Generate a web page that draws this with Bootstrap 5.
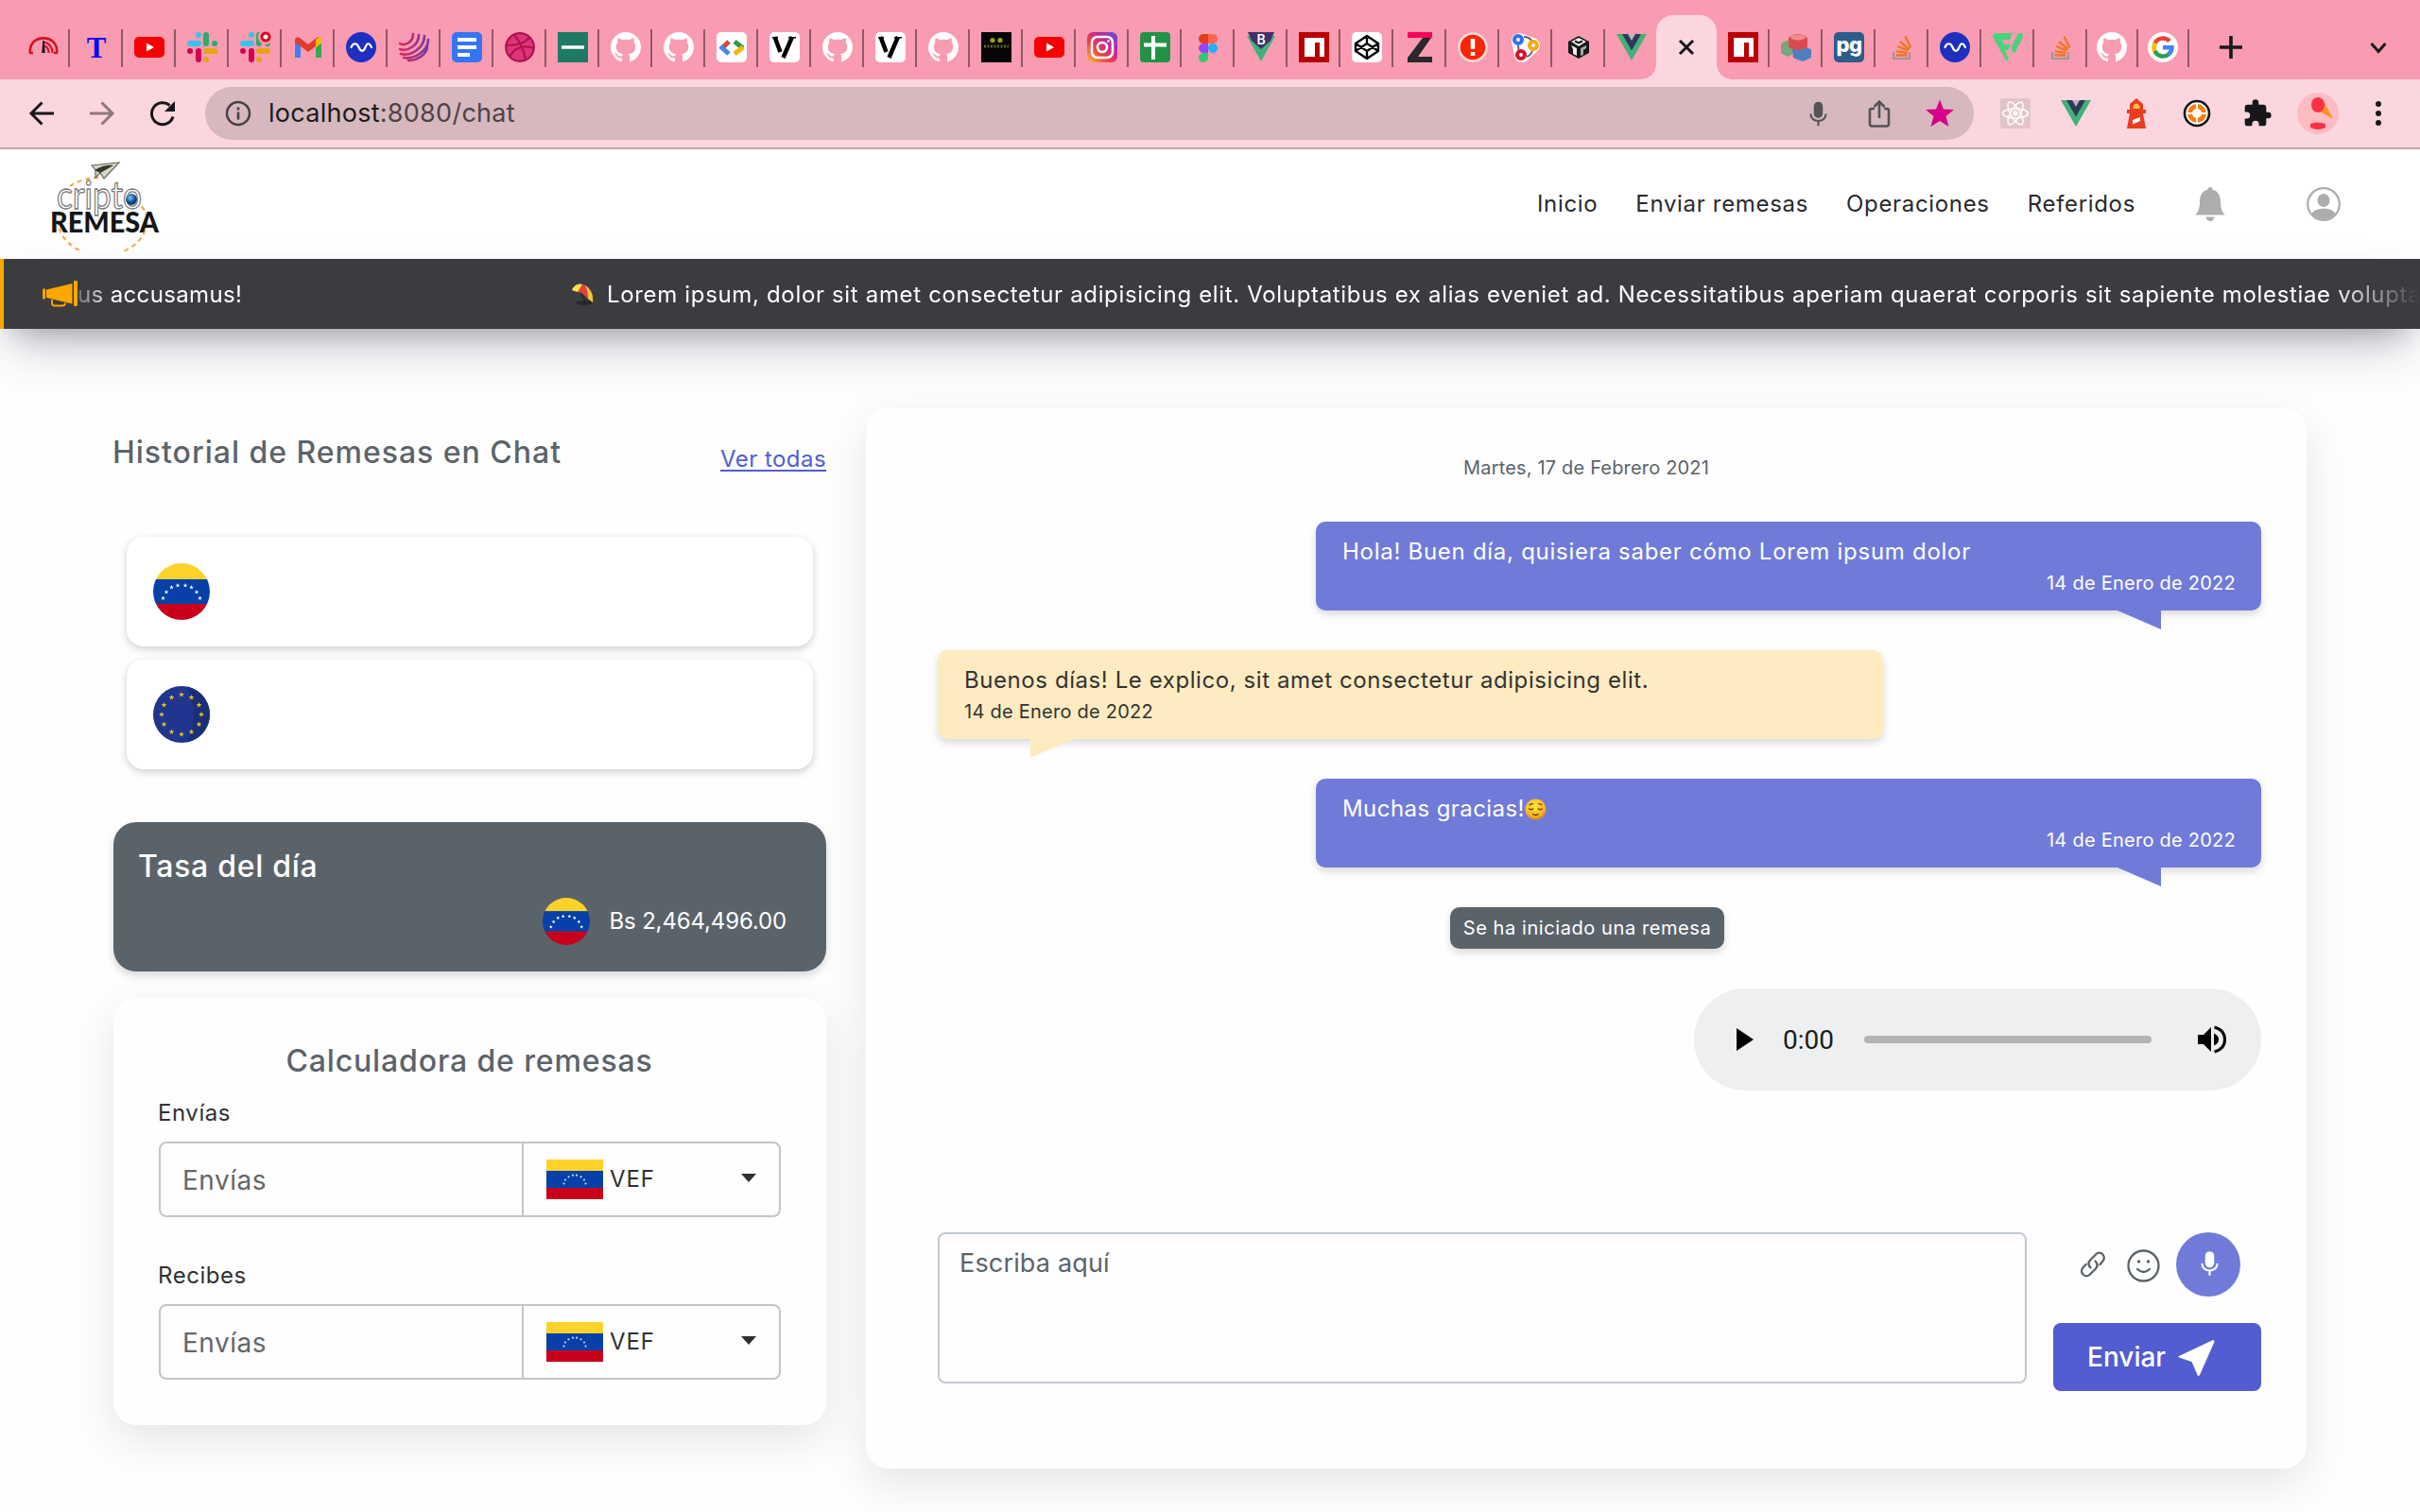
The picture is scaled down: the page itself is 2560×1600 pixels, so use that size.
<!DOCTYPE html>
<html lang="es">
<head>
<meta charset="utf-8">
<meta name="viewport" content="width=device-width, initial-scale=1">
<title>Cripto Remesa - Chat</title>
<link href="https://cdn.jsdelivr.net/npm/bootstrap@5.3.0/dist/css/bootstrap.min.css" rel="stylesheet">
<style>
body{font-family:Inter,"Open Sans",sans-serif;font-size:24px;letter-spacing:.0275em;line-height:34px;color:#2f3033;background:#fefefe;overflow:hidden;height:1600px}
svg{display:block;flex:none}
a{color:inherit}
/* browser chrome */
.tabstrip{height:84px;background:#f99bb1;padding-left:18px}
.tab-cell{width:56px;height:84px;padding:34px 0 0 12px;position:relative;flex:none}
.tab-cell.slim{width:54px;padding-left:10px}
.tab-cell::after{content:"";position:absolute;right:0;top:31px;width:2px;height:40px;background:#8e5a67}
.tab-cell.nosep::after{display:none}
.tab-cell svg{width:32px;height:32px;overflow:visible}
.tab-open{width:64px;height:68px;margin-left:-2px;background:#fcd6df;border-radius:18px 18px 0 0;position:relative;flex:none;padding-top:18px}
.tab-open::before,.tab-open::after{content:"";position:absolute;bottom:0;width:16px;height:16px}
.tab-open::before{left:-16px;background:radial-gradient(circle at 0 0,transparent 15.5px,#fcd6df 16px)}
.tab-open::after{right:-16px;background:radial-gradient(circle at 100% 0,transparent 15.5px,#fcd6df 16px)}
.new-tab{margin:16px 0 0 26px}
.tab-menu{margin:16px 0 0 126px}
.toolbar{height:74px;background:#fcd6df;border-bottom:2px solid #bda7ac;padding-left:28px}
.toolbar>.navicon{width:32px;margin-right:32px}
.omnibox{width:1871px;height:56px;background:#d6b8be;border-radius:28px;padding:0 20px 0 20px;margin-left:-3px}
.url{font-family:Inter,sans-serif;font-size:27px;letter-spacing:.01em;color:#1b1b1d;margin-left:17px}
.url span{color:#4c4346}
.omni-icons{gap:32px}
.ext-icons{gap:32px;margin-left:28px}
.avatar-slot{margin:0 -6px}
/* site header */
.site-nav{height:116px;background:#fff;padding:0 84px 0 50px}
.site-nav .menu{gap:40px;color:#29292b;letter-spacing:.028em}
.site-nav .bell{margin-left:63px}
.site-nav .user{margin-left:86px}
.ticker{height:74px;background:#3b3c40;border-left:4px solid #ffa600;color:#fff;padding-left:41px;box-shadow:0 26px 54px -10px rgba(50,50,93,.27),0 16px 32px -16px rgba(0,0,0,.33)}
.ticker-text{width:2478px;padding-top:1px;white-space:nowrap;overflow:hidden;-webkit-mask-image:linear-gradient(90deg,rgba(0,0,0,.25),#000 36px,#000 2385px,transparent 2478px);mask-image:linear-gradient(90deg,rgba(0,0,0,.25),#000 36px,#000 2385px,transparent 2478px)}
.ticker-end{width:523px;flex:none;letter-spacing:.015em}
/* page */
.page{padding:84px 120px 0;gap:42px}
.side{width:754px;padding-top:26px;flex:none}
.head-row{height:46px;color:#5b636a}
.heading{font-size:32px;font-weight:500;line-height:41px;margin:0 0 0 -1px;letter-spacing:.0306em;color:#5b636a}
.see-all{color:#515dd0;margin-top:10px;line-height:36px;letter-spacing:.0185em;text-underline-offset:3px}
.remit-list{margin:64px 14px 0;gap:14px}
.remit{height:116px;border-radius:18px;background:#fff;padding-left:28px;box-shadow:0 3px 8px rgba(0,0,0,.19)}
.rate{margin-top:56px;height:158px;border-radius:24px;background:#5b636a;color:#fff;padding:27px 42px 0 27px;box-shadow:0 4px 10px rgba(0,0,0,.16)}
.rate .heading{color:#fff;line-height:40px;letter-spacing:.022em}
.rate-row{margin-top:13px;gap:20px;letter-spacing:-.006em}
.soft-card{background:#fefefe;border-radius:24px;box-shadow:0 16px 48px rgba(0,0,0,.1)}
.calc{margin-top:28px;height:452px;padding:47px 48px 0}
.calc .heading{line-height:40px;letter-spacing:.027em}
.calc label{display:block;margin:18px 0 13px -1px;line-height:34px;letter-spacing:.023em}
.calc label.second{margin-top:45px}
.money{height:80px;border:2px solid #c5c5c5;border-radius:8px;background:#fefefe}
.money .form-control{width:384px;flex:none;border:0;border-right:2px solid #c5c5c5;border-radius:0;padding:2px 23px 0;font-size:28px;letter-spacing:.018em;background:transparent;box-shadow:none}
.money .form-control::placeholder{color:#666}
.currency{padding:0 24px;gap:7px;letter-spacing:.035em}
.caret{border:8px solid transparent;border-top:9px solid #2f3033;border-bottom:0;margin-top:-3px}
.chat{width:1524px;height:1122px;padding:48px 48px 0 76px}
.day{font-size:20px;line-height:30px;letter-spacing:.0087em;color:#5b636a;margin-left:-28px}
.thread{gap:42px}
.bubble{width:1000px;height:94px;border-radius:10px;padding:14px 28px;position:relative;line-height:36px;letter-spacing:.024em;box-shadow:0 4px 8px rgba(0,0,0,.15)}
.bubble time{display:block;font-size:20px;line-height:30px;letter-spacing:.0125em}
.bubble::after{content:"";position:absolute;top:94px;width:46px;height:20px}
.mine{background:#707bd9;color:#fff;align-self:flex-end;letter-spacing:.03em}
.mine time{text-align:right;margin-right:-1px}
.mine::after{right:106px;background:#707bd9;clip-path:polygon(0 0,100% 0,100% 100%)}
.theirs{background:#feebc1;color:#333}
.theirs::after{left:98px;background:#feebc1;clip-path:polygon(0 0,100% 0,0 100%)}
.thanks{letter-spacing:.018em}
.notice{height:44px;border-radius:10px;background:#5b636a;color:#fff;font-size:20px;line-height:45px;width:290px;text-align:center;align-self:center;margin-left:-26px;letter-spacing:.029em;white-space:nowrap;box-shadow:0 4px 8px rgba(0,0,0,.15)}
.player{width:600px;height:108px;border-radius:54px;background:#eeeff1;align-self:flex-end;padding:0 37px 0 45px}
.player .clock{font-family:Roboto,sans-serif;font-size:28px;letter-spacing:0;color:#1b1b1b;margin-left:31px;padding-top:2px}
.player .track{width:304px;height:8px;border-radius:4px;background:#b4b4b6;margin-left:32px}
.composer{margin-top:150px;gap:28px}
.composer textarea{width:1152px;height:160px;flex:none;border:2px solid #c3c8d3;border-radius:8px;padding:14px 21px;font-size:27px;line-height:34px;letter-spacing:.006em;resize:none;background:#fefefe}
.composer textarea::placeholder{color:#5b636a}
.tools{height:68px;padding-right:22px}
.smile{margin:3px 0 0 22px}
.mic{width:68px;height:68px;border-radius:50%;background:#707bd9;margin-left:17px}
.mic svg{margin:-2px 0 0 2px}
.send{width:220px;height:72px;margin-top:28px;background:#515dd0;color:#fff;border:0;border-radius:8px;font-size:28px;font-weight:500;letter-spacing:0;padding:0 0 0 36px;gap:12px}
</style>
</head>
<body>
<svg width="0" height="0" class="position-absolute">
<defs>
<symbol id="gh" viewBox="0 0 16 16"><path fill="#fff" d="M8 0C3.58 0 0 3.58 0 8c0 3.54 2.29 6.53 5.47 7.59.4.07.55-.17.55-.38 0-.19-.01-.82-.01-1.49-2.01.37-2.53-.49-2.69-.94-.09-.23-.48-.94-.82-1.13-.28-.15-.68-.52-.01-.53.63-.01 1.08.58 1.23.82.72 1.21 1.87.87 2.33.66.07-.52.28-.87.51-1.07-1.78-.2-3.64-.89-3.64-3.95 0-.87.31-1.59.82-2.15-.08-.2-.36-1.02.08-2.12 0 0 .67-.21 2.2.82.64-.18 1.32-.27 2-.27s1.36.09 2 .27c1.53-1.04 2.2-.82 2.2-.82.44 1.1.16 1.92.08 2.12.51.56.82 1.27.82 2.15 0 3.07-1.87 3.75-3.65 3.95.29.25.54.73.54 1.48 0 1.07-.01 1.93-.01 2.2 0 .21.15.46.55.38A8.01 8.01 0 0 0 16 8c0-4.42-3.58-8-8-8"/></symbol>
<symbol id="yt" viewBox="0 0 32 32"><rect y="5" width="32" height="22" rx="5" fill="#f60002"/><path d="M13 11.500l8 4.500-8 4.500z" fill="#fff"/></symbol>
<symbol id="slack" viewBox="0 0 32 32"><g fill="#36c5f0"><rect x="9" y="0" width="6" height="6" rx="3"/><rect x="0" y="9" width="15" height="6" rx="3"/></g><g fill="#2fac6a"><rect x="17" y="0" width="6" height="15" rx="3"/><rect x="26" y="9" width="6" height="6" rx="3"/></g><g fill="#d5004e"><rect x="0" y="17" width="6" height="6" rx="3"/><rect x="9" y="17" width="6" height="15" rx="3"/></g><g fill="#e8a317"><rect x="17" y="17" width="15" height="6" rx="3"/><rect x="17" y="26" width="6" height="6" rx="3"/></g></symbol>
<symbol id="wave" viewBox="0 0 32 32"><circle cx="16" cy="16" r="16" fill="#1d30c0"/><path d="M5.500 16c2-5 6-5 8 0s5 5 7 0 4-5 6.500 0" fill="none" stroke="#fff" stroke-width="2.200" stroke-linecap="round"/></symbol>
<symbol id="ylogo" viewBox="0 0 32 32"><rect width="32" height="32" rx="5" fill="#fff"/><path d="M5.500 5l6 16M24 5L14.500 27" stroke="#000" stroke-width="4.500" fill="none"/><path d="M3 5.700h6M20 5.700h8" stroke="#000" stroke-width="1.400"/></symbol>
<symbol id="vue" viewBox="0 0 32 32"><path d="M0 2h32L16 30z" fill="#42b07a"/><path d="M6 2h20L16 19.500z" fill="#2c3a56"/><path d="M12 2h8l-4 7z" fill="#fcd6df" opacity=".75"/></symbol>
<symbol id="npm" viewBox="0 0 32 32"><rect width="32" height="32" fill="#b90002"/><path d="M6 6h21v20h-5V11h-5v15H6z" fill="#fff"/></symbol>
<symbol id="so" viewBox="0 0 32 32"><path d="M7 21v7h17v-7" fill="none" stroke="#98989c" stroke-width="2"/><path d="M9.500 24.500h12M9.700 20.300l12 1.600M11 15l11.500 4.400M14 10l9.700 8M19.500 4.500l6 12" stroke="#f0761f" stroke-width="2.300"/></symbol>
<symbol id="star" viewBox="-5 -5 10 10"><path d="M0-5l1.200 3.400 3.600.1-2.900 2.200 1 3.500L0 2.100-2.900 4.200l1-3.500-2.900-2.200 3.600-.1z"/></symbol>
<symbol id="ve" viewBox="0 0 60 60"><path fill="#fdd32b" d="M0 0h60v17H0z"/><path fill="#0640a8" d="M0 17h60v26H0z"/><path fill="#c8001c" d="M0 43h60v17H0z"/><g fill="#fff"><use href="#star" x="8" y="34.500" width="5" height="5"/><use href="#star" x="11.500" y="28" width="5" height="5"/><use href="#star" x="17" y="23" width="5" height="5"/><use href="#star" x="23.500" y="21" width="5" height="5"/><use href="#star" x="31.500" y="21" width="5" height="5"/><use href="#star" x="38" y="23" width="5" height="5"/><use href="#star" x="43.500" y="28" width="5" height="5"/><use href="#star" x="47" y="34.500" width="5" height="5"/></g></symbol>
<symbol id="verect" viewBox="0 0 60 42"><path fill="#fdd32b" d="M0 0h60v12H0z"/><path fill="#0640a8" d="M0 12h60v18H0z"/><path fill="#c8001c" d="M0 30h60v12H0z"/><g fill="#c9d8f5"><circle cx="18.500" cy="25.500" r="1.100"/><circle cx="20" cy="21.500" r="1.100"/><circle cx="23.500" cy="18.300" r="1.100"/><circle cx="28" cy="16.700" r="1.100"/><circle cx="32" cy="16.700" r="1.100"/><circle cx="36.500" cy="18.300" r="1.100"/><circle cx="40" cy="21.500" r="1.100"/><circle cx="41.500" cy="25.500" r="1.100"/></g></symbol>
<symbol id="micro" viewBox="0 0 20 28"><rect x="5" y="0" width="10" height="18" rx="5" fill="currentColor"/><path d="M1.500 13.500c0 10.500 17 10.500 17 0M10 21.500V27" fill="none" stroke="currentColor" stroke-width="2.200"/></symbol>
<linearGradient id="ig" x1="0" y1="1" x2="1" y2="0"><stop offset="0" stop-color="#fdc04a"/><stop offset=".35" stop-color="#f0453f"/><stop offset=".65" stop-color="#c32a96"/><stop offset="1" stop-color="#5b4fd8"/></linearGradient>
<linearGradient id="sw" x1="0" x2="1"><stop offset="0" stop-color="#e0245e"/><stop offset="1" stop-color="#6b3fa0"/></linearGradient>
<radialGradient id="face" cx=".45" cy=".35" r=".65"><stop offset="0" stop-color="#ffe63e"/><stop offset=".7" stop-color="#fbb920"/><stop offset="1" stop-color="#e8801a"/></radialGradient>
<radialGradient id="globe" cx=".4" cy=".35"><stop offset="0" stop-color="#8fc8ec"/><stop offset=".6" stop-color="#2273b5"/><stop offset="1" stop-color="#0c3f7a"/></radialGradient>
</defs>
</svg>

<!-- tab strip -->
<div class="tabstrip d-flex">
<div class="tab-cell"><svg viewBox="0 0 32 32"><path d="M2 22.500C-1 1 33 1 30 22.500M5 22H1M27 22h4" fill="none" stroke="#d3121f" stroke-width="2.600"/><path d="M16 10.500c7 1 9.500 7 9.500 11.500M17 14.500c3 1 4.500 4 4.500 7.500" fill="none" stroke="#d3121f" stroke-width="2.200"/><path d="M15.200 9h1.600l1 13h-3.600z" fill="#26161a"/></svg></div>
<div class="tab-cell"><svg viewBox="0 0 32 32"><text x="16" y="27" text-anchor="middle" font-family="Liberation Serif,serif" font-weight="700" font-size="31" letter-spacing="0" fill="#0a0af0">T</text></svg></div>
<div class="tab-cell"><svg><use href="#yt"/></svg></div>
<div class="tab-cell"><svg><use href="#slack"/></svg></div>
<div class="tab-cell"><svg viewBox="0 0 32 32"><use href="#slack"/><circle cx="27" cy="5" r="8" fill="#f99bb1"/><circle cx="27" cy="5" r="4" fill="#fff" stroke="#e3001b" stroke-width="3"/></svg></div>
<div class="tab-cell"><svg viewBox="0 0 32 32"><path d="M2 9v18h6V14z" fill="#3f7ff0"/><path d="M30 9v18h-6V14z" fill="#34a853"/><path d="M2 8q1-4 5-2l9 7 9-7q4-2 5 2l-6 7-8 6-8-6-6-4z" fill="#e33b2e"/><path d="M24 8l4-3q2 1 2 4v2.500l-6 5z" fill="#fbbc04"/></svg></div>
<div class="tab-cell"><svg><use href="#wave"/></svg></div>
<div class="tab-cell"><svg viewBox="0 0 32 32" fill="none" stroke="url(#sw)" stroke-width="2.600" stroke-linecap="round"><path d="M1 12c5 3 14-1 14-10M1 18c8 3 20-4 20-15M2 23c10 3 25-6 25-19M5 27c11 2 26-7 26-19M10 30c10 0 20-7 20-15"/></svg></div>
<div class="tab-cell"><svg viewBox="0 0 32 32"><rect width="32" height="32" rx="5" fill="#3574f5"/><path d="M6 8h20M6 16h20M6 24h13" stroke="#fff" stroke-width="4"/></svg></div>
<div class="tab-cell"><svg viewBox="0 0 32 32"><circle cx="16" cy="16" r="14.800" fill="#df3477" stroke="#ad1451" stroke-width="2.200"/><path d="M10 3c6 7 10 15 12 26M2 14c10 0 19-2 24-8M5 26c5-9 14-13 26-9" fill="none" stroke="#ad1451" stroke-width="2.200"/></svg></div>
<div class="tab-cell"><svg viewBox="0 0 32 32"><rect width="32" height="32" fill="#1e7a65"/><path d="M4 16h24" stroke="#fff" stroke-width="3.500"/></svg></div>
<div class="tab-cell"><svg><use href="#gh"/></svg></div>
<div class="tab-cell"><svg><use href="#gh"/></svg></div>
<div class="tab-cell"><svg viewBox="0 0 32 32" fill="none" stroke-width="5"><rect width="32" height="32" rx="5" fill="#fff"/><path d="M13 10l-6 6" stroke="#dc4437"/><path d="M4 15l9 8" stroke="#4383f5"/><path d="M19 10l9 7" stroke="#2c9a4b"/><path d="M28 16l-9 7" stroke="#f5b50a"/></svg></div>
<div class="tab-cell"><svg><use href="#ylogo"/></svg></div>
<div class="tab-cell"><svg><use href="#gh"/></svg></div>
<div class="tab-cell"><svg><use href="#ylogo"/></svg></div>
<div class="tab-cell"><svg><use href="#gh"/></svg></div>
<div class="tab-cell"><svg viewBox="0 0 32 32"><rect width="32" height="32" fill="#050505"/><circle cx="12" cy="8.500" r="2.600" fill="#9aa01a"/><circle cx="20" cy="8.500" r="2.600" fill="#9aa01a"/><path d="M3 15h26" stroke="#5d6a22" stroke-width="3" stroke-dasharray="2 1.500"/></svg></div>
<div class="tab-cell"><svg><use href="#yt"/></svg></div>
<div class="tab-cell"><svg viewBox="0 0 32 32" fill="none" stroke="#fff" stroke-width="2.600"><rect width="32" height="32" rx="6" fill="url(#ig)" stroke="none"/><rect x="5" y="5" width="22" height="22" rx="6"/><circle cx="16" cy="16" r="5"/><circle cx="22.500" cy="9.500" r="1.300" fill="#fff" stroke="none"/></svg></div>
<div class="tab-cell"><svg viewBox="0 0 32 32"><rect width="32" height="32" rx="4" fill="#249246"/><path d="M14 4v25M4 13.500h24" stroke="#fff" stroke-width="4"/></svg></div>
<div class="tab-cell"><svg viewBox="0 0 32 32"><path d="M11 2h5v10h-5a5 5 0 0 1 0-10z" fill="#e63c18"/><path d="M16 2h5a5 5 0 0 1 0 10h-5z" fill="#ff6452"/><path d="M16 12h-5a5 5 0 0 0 0 10h5z" fill="#9345ff"/><circle cx="21" cy="17" r="5" fill="#20b0fb"/><path d="M11 22h5v5a5 5 0 1 1-5-5z" fill="#30c971"/></svg></div>
<div class="tab-cell"><svg viewBox="0 0 32 32"><path d="M1 4h30L16 31z" fill="#42b07a"/><path d="M2 0h28l-4 9-10 9L6 9z" fill="#41306b"/><text x="16" y="13" text-anchor="middle" font-size="14" letter-spacing="0" font-weight="600" fill="#fff">B</text></svg></div>
<div class="tab-cell"><svg><use href="#npm"/></svg></div>
<div class="tab-cell"><svg viewBox="0 0 32 32" fill="none" stroke="#000" stroke-width="2.300" stroke-linejoin="round"><rect width="32" height="32" rx="5" fill="#fff" stroke="none"/><path d="M16 4l12 8v8l-12 8-12-8v-8zM16 4v8M16 20v8M4 12l12 8 12-8M4 20l12-8 12 8"/></svg></div>
<div class="tab-cell"><svg viewBox="0 0 32 32"><path d="M3 0h26v6H3z" fill="#fa0358"/><path d="M19 6h9L14 26h15v6H3v-5z" fill="#29292c"/></svg></div>
<div class="tab-cell"><svg viewBox="0 0 32 32"><circle cx="16" cy="16" r="14.500" fill="#fb2405" stroke="#ffdcd8" stroke-width="2.500"/><path d="M16 7v11M16 21v4" stroke="#fff" stroke-width="4.500"/></svg></div>
<div class="tab-cell"><svg viewBox="0 0 32 32" fill="none"><path d="M9 9L23 14L12 24Z" stroke="#fff" stroke-width="16" stroke-linejoin="round"/><path d="M14 5q6 0 9 5M8 14q0 5 2 8M17 26q4-1 6-6" stroke="#666" stroke-width="2"/><g stroke-width="4"><circle cx="8" cy="8" r="4" stroke="#326ff0"/><circle cx="24" cy="14" r="4" stroke="#f7a90b"/><circle cx="11" cy="24" r="4" stroke="#ce1528"/></g></svg></div>
<div class="tab-cell"><svg viewBox="0 0 32 32"><path d="M16 4l11 6v12l-11 6-11-6V10z" fill="#17181a"/><path d="M8 10l8-4 8 4-8 5zM8 14l6 3v8l-4-2v-5z" fill="#eee"/><path d="M18 17l6-3v3l-3 2v5l-3 1z" fill="#a8a8ac"/><path d="M12 9.500l4 2 4-2" stroke="#17181a" stroke-width="2" fill="none"/></svg></div>
<div class="tab-cell nosep"><svg><use href="#vue"/></svg></div>
<div class="tab-open align-self-end"><svg class="mx-auto" width="32" height="32" viewBox="0 0 32 32"><path d="M9 9l14 14M23 9L9 23" stroke="#17171a" stroke-width="3"/></svg></div>
<div class="tab-cell"><svg><use href="#npm"/></svg></div>
<div class="tab-cell"><svg viewBox="0 0 32 32"><path d="M0 12l8-4 7 4v10l-8 4-7-4z" fill="#79a878"/><path d="M12 18l10-3 10 3v9l-9 4-10-4z" fill="#4d7ec0"/><path d="M8 6q10-8 20 0v10q-10 6-20 0z" fill="#dc4a50"/><ellipse cx="18" cy="5.500" rx="8" ry="3" fill="#ee8b8d"/></svg></div>
<div class="tab-cell"><svg viewBox="0 0 32 32"><rect width="32" height="32" rx="5" fill="#2b5c8a"/><text x="16" y="21" text-anchor="middle" font-size="22" letter-spacing="-.5" font-weight="800" fill="#fff">pg</text></svg></div>
<div class="tab-cell"><svg><use href="#so"/></svg></div>
<div class="tab-cell"><svg><use href="#wave"/></svg></div>
<div class="tab-cell"><svg viewBox="0 0 32 32"><path d="M3 1h18l-3 7h-8l2 5h7l-3 6h-3l4 9q-2 4-4 0L0 5q0-3 3-4zM27 1h3q3 1 2 4l-9 18-4-6z" fill="#49d27c"/></svg></div>
<div class="tab-cell"><svg><use href="#so"/></svg></div>
<div class="tab-cell slim"><svg><use href="#gh"/></svg></div>
<div class="tab-cell slim"><svg viewBox="0 0 32 32" fill="none" stroke-width="4.500"><circle cx="16" cy="16" r="16" fill="#fff"/><path d="M23 9.500A9.500 9.500 0 0 0 7.500 12" stroke="#ea4335"/><path d="M7.700 11.500a9.500 9.500 0 0 0 0 9" stroke="#fbbc05"/><path d="M7.500 20a9.500 9.500 0 0 0 14.500 3.500" stroke="#2f9e50"/><path d="M21.500 23.800q4-3 4-7.600H16" stroke="#4285f4"/></svg></div>
<svg class="new-tab align-self-center" width="36" height="36" viewBox="0 0 36 36"><path d="M18 6v24M6 18h24" stroke="#17171a" stroke-width="3.600"/></svg>
<svg class="tab-menu align-self-center" width="24" height="24" viewBox="0 0 24 24"><path d="M4.500 8l7.500 8.500L19.500 8" fill="none" stroke="#17171a" stroke-width="3"/></svg>
</div>

<!-- address bar -->
<div class="toolbar d-flex align-items-center">
<svg class="navicon" height="32" viewBox="0 0 32 32"><path d="M29 16H5M16.500 4.500L5 16l11.500 11.500" fill="none" stroke="#17171a" stroke-width="3"/></svg>
<svg class="navicon" height="32" viewBox="0 0 32 32"><path d="M3 16h24M15.500 4.500L27 16 15.500 27.500" fill="none" stroke="#8f777e" stroke-width="3"/></svg>
<svg class="navicon" height="32" viewBox="0 0 32 32"><path d="M27 19.500A11.500 11.500 0 1 1 23.500 7.500" fill="none" stroke="#17171a" stroke-width="3"/><path d="M29 3v11H18z" fill="#17171a"/></svg>
<div class="omnibox d-flex align-items-center">
<svg width="30" height="30" viewBox="0 0 30 30"><circle cx="15" cy="15" r="12" fill="none" stroke="#454046" stroke-width="2.500"/><path d="M15 13.500v8M15 8.500v3" stroke="#454046" stroke-width="2.600"/></svg>
<div class="url">localhost<span>:8080/chat</span></div>
<div class="omni-icons d-flex align-items-center ms-auto" style="color:#545457">
<svg width="32" height="32" viewBox="0 0 32 32"><use href="#micro" x="6" y="3" width="19" height="28"/></svg>
<svg width="32" height="32" viewBox="0 0 32 32"><path d="M11 11H8q-2 0-2 2v14q0 2.500 2 2.500h16q2 0 2-2.500V13q0-2-2-2h-3M16 21V4M10.500 9L16 3.500 21.500 9" fill="none" stroke="currentColor" stroke-width="2.600"/></svg>
<svg width="32" height="32" viewBox="0 0 32 32"><path d="M16 1.500l4 10 11 .5-8.500 7 3 11L16 24l-9.500 6 3-11L1 12l11-.5z" fill="#d6008b"/></svg>
</div>
</div>
<div class="ext-icons d-flex align-items-center">
<svg width="32" height="32" viewBox="0 0 32 32" fill="none" stroke="#fff" stroke-width="1.500"><rect width="32" height="32" rx="3" fill="#e3c3ca" stroke="none"/><ellipse cx="16" cy="16" rx="13.500" ry="5"/><ellipse cx="16" cy="16" rx="13.500" ry="5" transform="rotate(60 16 16)"/><ellipse cx="16" cy="16" rx="13.500" ry="5" transform="rotate(120 16 16)"/><circle cx="16" cy="16" r="2" fill="#fff"/></svg>
<svg width="32" height="32"><use href="#vue"/></svg>
<svg width="32" height="32" viewBox="0 0 32 32"><path d="M9 6l7-6 7 6v6H9zM6 12h20v4H6zM9 16h14l3 16H6z" fill="#ea3c20"/><path d="M12.500 11V8q3.500-5 7 0v3z" fill="#f7c545"/><path d="M12 23l8-3v4l-8 3.500z" fill="#fff"/></svg>
<svg width="32" height="32" viewBox="0 0 32 32"><circle cx="16" cy="16" r="13" fill="#fff" stroke="#17171a" stroke-width="2.600"/><circle cx="16" cy="16" r="7.500" fill="#fff" stroke="#fb7a0d" stroke-width="5"/><path d="M16 5v6M16 21v6M5 16h6M21 16h6" stroke="#fff" stroke-width="2"/></svg>
<svg width="32" height="32" viewBox="0 0 24 24"><path d="M20.500 11H19V7c0-1.100-.9-2-2-2h-4V3.500a2.500 2.500 0 0 0-5 0V5H4c-1.100 0-2 .9-2 2v3.800h1.500a2.700 2.700 0 0 1 0 5.400H2V20c0 1.100.9 2 2 2h3.800v-1.500a2.700 2.700 0 0 1 5.400 0V22H17c1.100 0 2-.9 2-2v-4h1.500a2.500 2.500 0 0 0 0-5z" fill="#17171a"/></svg>
<svg class="avatar-slot" width="44" height="44" viewBox="0 0 44 44"><circle cx="22" cy="22" r="22" fill="#fdbcc2"/><path d="M29 10l9 18-14-8z" fill="#fb9526"/><ellipse cx="22" cy="13" rx="7" ry="8" fill="#fa3144"/><path d="M14 33q8-3 16 0v4q-8 4-16 0z" fill="#fa3144"/></svg>
<svg width="32" height="32" viewBox="0 0 32 32" fill="#17171a"><circle cx="16" cy="6" r="3"/><circle cx="16" cy="16" r="3"/><circle cx="16" cy="26" r="3"/></svg>
</div>
</div>

<!-- site header -->
<header class="site-nav d-flex align-items-center">
<svg width="122" height="100" viewBox="50 166 122 100">
<path d="M74 197a47 37 0 0 1 30-9M63 224a47 37 0 1 0 91 0l-7-9" fill="none" stroke="#f7a53e" stroke-width="2" stroke-dasharray="5 4"/>
<path d="M97 175l29-3-16 17-4-6-5 5v-8z" fill="#d2d8c0" stroke="#676b5c" stroke-width="1.200"/><path d="M100 180q10-6 20-5l-14 8z" fill="#34372d"/>
<text x="60" y="221" font-family="Lato,sans-serif" font-size="40" letter-spacing="0" textLength="90" lengthAdjust="spacingAndGlyphs" fill="#fff" stroke="#77777a" stroke-width="1.300">cripto</text>
<circle cx="139" cy="211" r="6" fill="url(#globe)"/>
<text x="53" y="246" font-family="Lato,sans-serif" font-weight="900" font-size="31" letter-spacing="0" textLength="115" lengthAdjust="spacingAndGlyphs" fill="#161616">REMESA</text>
</svg>
<nav class="menu d-flex ms-auto">
<a class="text-decoration-none" href="#">Inicio</a>
<a class="text-decoration-none" href="#">Enviar remesas</a>
<a class="text-decoration-none" href="#">Operaciones</a>
<a class="text-decoration-none" href="#">Referidos</a>
</nav>
<svg class="bell" width="32" height="36" viewBox="0 0 32 36" fill="#adadad"><path d="M16 0q2.500 0 2.500 2.800C26 4.500 27 11 27 17q0 7 4.500 12.500H.500Q5 24 5 17C5 11 6 4.500 13.500 2.800 13.500 0 16 0 16 0zM11.500 31.500h9q-1 4.500-4.500 4.500t-4.500-4.500z"/></svg>
<svg class="user" width="36" height="36" viewBox="0 0 36 36"><circle cx="18" cy="18" r="16.800" fill="none" stroke="#adadad" stroke-width="2.200"/><ellipse cx="18" cy="14" rx="6.500" ry="7" fill="#adadad"/><path d="M5.500 28C9 21 27 21 30.500 28 24 36 12 36 5.500 28z" fill="#adadad"/></svg>
</header>

<div class="ticker d-flex align-items-center">
<svg width="37" height="28" viewBox="0 0 37 28" fill="#ffa600"><rect x="0" y="8.500" width="3" height="11" rx="1"/><path d="M4 9.500L31.500 3v21.500L4 18z"/><rect x="33" y="0" width="4" height="27" rx="1"/><path d="M10 20v4q0 2.500 3 2.500h8q3 0 3-3" fill="none" stroke="#ffa600" stroke-width="1.800"/></svg>
<div class="ticker-text d-flex align-items-center">
<span class="ticker-end">us accusamus!</span>
<svg width="24" height="24" viewBox="0 0 24 24"><ellipse cx="13" cy="20.500" rx="9" ry="2.500" fill="#29292b"/><path d="M10 10l5 11" stroke="#222" stroke-width="1.500"/><path d="M0 7C3 0 11-1 16 3c5 4 7 10 6 17L10 10z" fill="#e2403c"/><path d="M0 7C3 0 9 0 11 1L6 9z" fill="#f9e04a"/><path d="M14 2c6 4 9 10 8 18l-5-4q0-9-3-14z" fill="#eec73c"/></svg>
<span style="margin-left:13px">Lorem ipsum, dolor sit amet consectetur adipisicing elit. Voluptatibus ex alias eveniet ad. Necessitatibus aperiam quaerat corporis sit sapiente molestiae voluptatibus accusamus!</span>
</div>
</div>

<!-- page -->
<main class="page d-flex">
<section class="side">
<div class="head-row d-flex justify-content-between align-items-start">
<h2 class="heading">Historial de Remesas en Chat</h2>
<a class="see-all" href="#">Ver todas</a>
</div>
<div class="remit-list d-flex flex-column">
<div class="remit d-flex align-items-center"><svg class="rounded-circle" width="60" height="60"><use href="#ve"/></svg></div>
<div class="remit d-flex align-items-center"><svg class="rounded-circle" width="60" height="60" viewBox="0 0 60 60"><path fill="#20368e" d="M0 0h60v60H0z"/><path fill="#1b2f78" d="M36 0q13 28 0 60h24V0z"/><g fill="#e8c71c"><use href="#star" x="27" y="6" width="6" height="6"/><use href="#star" x="37.500" y="9" width="6" height="6"/><use href="#star" x="45.500" y="17" width="6" height="6"/><use href="#star" x="48" y="27" width="6" height="6"/><use href="#star" x="45.500" y="37.500" width="6" height="6"/><use href="#star" x="37.500" y="45.500" width="6" height="6"/><use href="#star" x="27" y="48" width="6" height="6"/><use href="#star" x="16.500" y="45.500" width="6" height="6"/><use href="#star" x="8.500" y="37.500" width="6" height="6"/><use href="#star" x="6" y="27" width="6" height="6"/><use href="#star" x="8.500" y="17" width="6" height="6"/><use href="#star" x="16.500" y="9" width="6" height="6"/></g></svg></div>
</div>
<div class="rate">
<h3 class="heading">Tasa del día</h3>
<div class="rate-row d-flex justify-content-end align-items-center"><svg class="rounded-circle" width="50" height="50"><use href="#ve"/></svg><span>Bs 2,464,496.00</span></div>
</div>
<form class="calc soft-card">
<h3 class="heading text-center">Calculadora de remesas</h3>
<label for="send-amount">Envías</label>
<div class="money d-flex">
<input id="send-amount" class="form-control" placeholder="Envías">
<div class="currency d-flex align-items-center flex-grow-1"><svg width="60" height="42"><use href="#verect"/></svg><span>VEF</span><span class="caret ms-auto"></span></div>
</div>
<label class="second" for="get-amount">Recibes</label>
<div class="money d-flex">
<input id="get-amount" class="form-control" placeholder="Envías">
<div class="currency d-flex align-items-center flex-grow-1"><svg width="60" height="42"><use href="#verect"/></svg><span>VEF</span><span class="caret ms-auto"></span></div>
</div>
</form>
</section>

<section class="chat soft-card">
<div class="thread d-flex flex-column">
<div class="day text-center">Martes, 17 de Febrero 2021</div>
<div class="bubble mine">Hola! Buen día, quisiera saber cómo Lorem ipsum dolor<time>14 de Enero de 2022</time></div>
<div class="bubble theirs">Buenos días! Le explico, sit amet consectetur adipisicing elit.<time>14 de Enero de 2022</time></div>
<div class="bubble mine"><div class="thanks d-flex align-items-center">Muchas gracias!<svg width="23" height="23" viewBox="0 0 24 24"><circle cx="12" cy="12" r="11.500" fill="url(#face)"/><path d="M4.500 11q2.500 2.500 5 0M14.500 11q2.500 2.500 5 0M8.500 17q3.500 2.500 7 0M5 7.500q1.500-2 4-1.500M15 6q2.500-.5 4 1.500" fill="none" stroke="#6b3d10" stroke-width="1.400"/></svg></div><time>14 de Enero de 2022</time></div>
<div class="notice">Se ha iniciado una remesa</div>
<div class="player d-flex align-items-center">
<svg width="18" height="24" viewBox="0 0 18 24"><path d="M0 0l18 12L0 24z"/></svg>
<span class="clock">0:00</span><span class="track"></span>
<svg class="ms-auto" width="30" height="30" viewBox="0 0 30 30"><path d="M0 10h6l8-8v26l-8-8H0z"/><path d="M17 8.500q5 2 5 6.500t-5 6.500z"/><path d="M17.500 2Q28.500 5 28.500 15T17.500 28" fill="none" stroke="#000" stroke-width="3"/></svg>
</div>
</div>
<div class="composer d-flex">
<textarea class="form-control" placeholder="Escriba aquí"></textarea>
<div class="flex-grow-1">
<div class="tools d-flex justify-content-end align-items-center">
<svg width="28" height="28" viewBox="0 0 28 28" fill="none" stroke="#5b636a" stroke-width="2.400" stroke-linecap="round"><path d="M11.500 17.500c-3-3-2.500-6 0-8.500l5.500-5.500c5-5 11.500 2 7.500 7l-3 3.500M16.500 10.500c3 3 2.500 6 0 8.500L11 24.500c-5 5-12-2-7.500-7l3-3.500"/></svg>
<svg class="smile" width="35" height="35" viewBox="0 0 35 35" fill="none" stroke="#5b636a" stroke-width="2.300" stroke-linecap="round"><circle cx="17.500" cy="17.500" r="16"/><path d="M11 21q6.500 6 13 0"/><g fill="#5b636a" stroke="none"><circle cx="12.500" cy="13" r="1.700"/><circle cx="22.500" cy="13" r="1.700"/></g></svg>
<div class="mic d-flex align-items-center justify-content-center text-white"><svg width="19" height="27" viewBox="0 0 20 28"><use href="#micro"/></svg></div>
</div>
<button class="send btn d-flex align-items-center" type="button">Enviar<svg width="41" height="41" viewBox="0 0 41 41"><path d="M2 19L38 2q2 0 1.500 2L24 39q-1.500 2-2.500 0l-6-14L2 20.500q-1.500-.8 0-1.500z" fill="#fff"/></svg></button>
</div>
</div>
</section>
</main>
<script src="https://cdn.jsdelivr.net/npm/bootstrap@5.3.0/dist/js/bootstrap.bundle.min.js"></script>
</body>
</html>
